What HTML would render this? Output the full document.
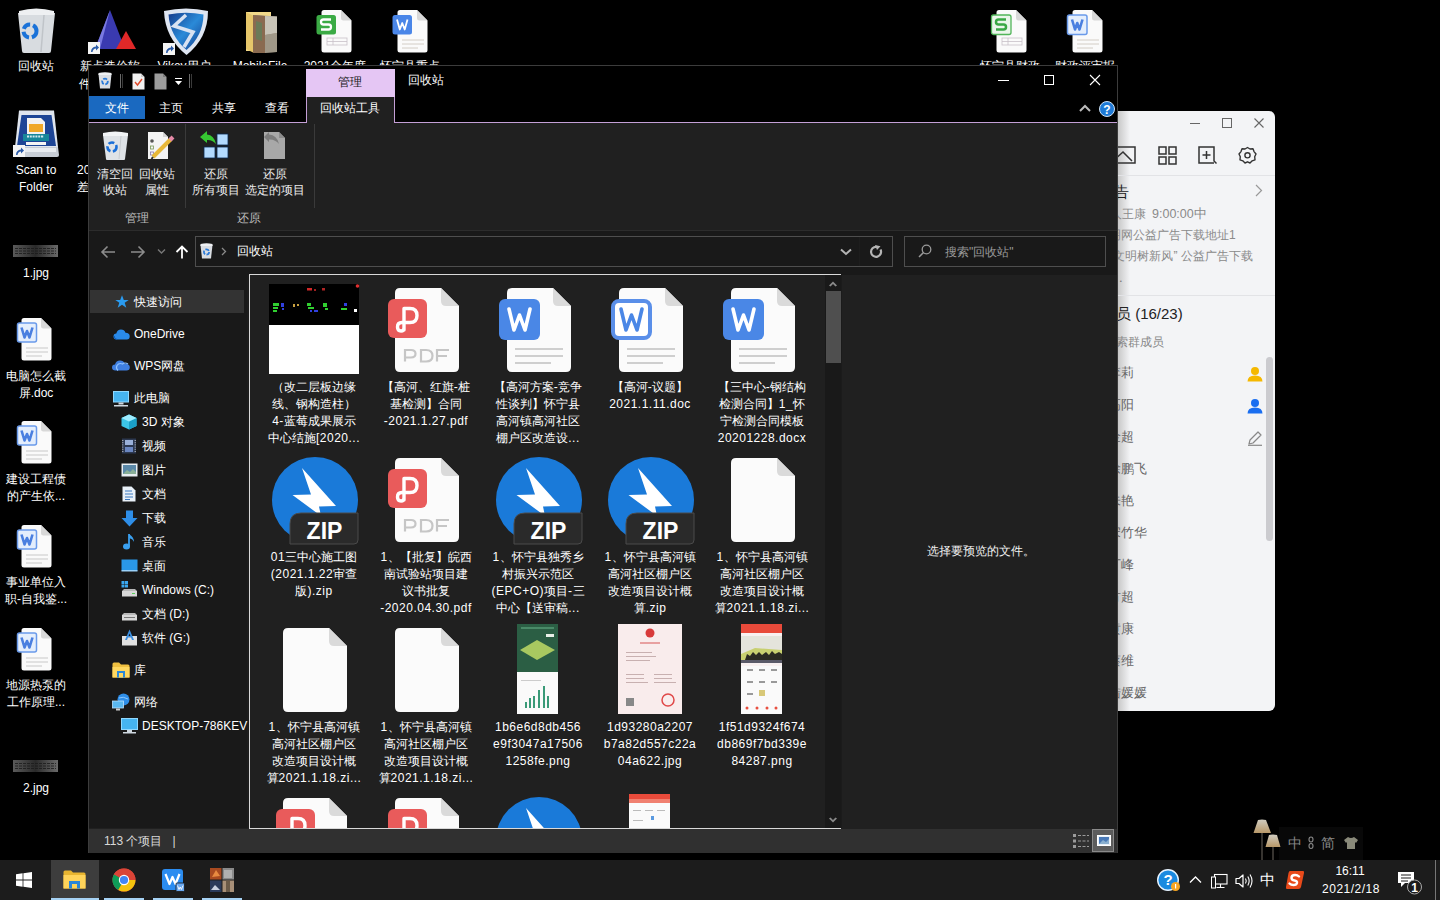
<!DOCTYPE html>
<html><head><meta charset="utf-8"><style>
*{margin:0;padding:0;box-sizing:border-box}
html,body{width:1440px;height:900px;overflow:hidden;background:#000}
body{position:relative;font-family:"Liberation Sans",sans-serif;font-size:12px;color:#fff}
.a{position:absolute}
.t{position:absolute;white-space:nowrap;line-height:16px}
svg{display:block;overflow:visible}
.dl{position:absolute;width:80px;text-align:center;color:#fff;font-size:12px;line-height:17px;white-space:nowrap}
.fl{position:absolute;width:112px;text-align:center;color:#fff;font-size:12px;line-height:17px;white-space:nowrap}
.nv{position:absolute;color:#fff;font-size:12px;line-height:16px;white-space:nowrap}
.rl{position:absolute;color:#e6e6e6;font-size:12px;line-height:17px;text-align:center;white-space:nowrap}
.ch{position:absolute;color:#8a8a8a;font-size:12px;line-height:16px;white-space:nowrap}
</style></head><body>
<svg width="0" height="0" style="position:absolute">
<defs>
 <symbol id="doc" viewBox="0 0 64 84">
  <path d="M5 0H46L64 18V79Q64 84 59 84H5Q0 84 0 79V5Q0 0 5 0Z" fill="#fbfbfb"/>
  <path d="M46 0V13Q46 18 51 18H64Z" fill="#dadada"/>
 </symbol>
 <symbol id="wb" viewBox="0 0 41 41">
  <rect x="0" y="0" width="41" height="41" rx="6" fill="#4a87e6"/>
  <path d="M10 10L15 31L20.5 16L26 31L31 10" fill="none" stroke="#fff" stroke-width="3.6" stroke-linecap="round" stroke-linejoin="round"/>
 </symbol>
 <symbol id="wb2" viewBox="0 0 41 41">
  <rect x="2" y="2" width="37" height="37" rx="6" fill="#fff" stroke="#5a8fe9" stroke-width="4"/>
  <path d="M10 10L15 31L20.5 16L26 31L31 10" fill="none" stroke="#4a87e6" stroke-width="3.6" stroke-linecap="round" stroke-linejoin="round"/>
 </symbol>
 <symbol id="lines" viewBox="0 0 48 16">
  <rect x="0" y="0" width="48" height="2" fill="#cfcfcf"/>
  <rect x="0" y="7" width="48" height="2" fill="#cfcfcf"/>
  <rect x="0" y="14" width="36" height="2" fill="#cfcfcf"/>
 </symbol>
 <symbol id="pb" viewBox="0 0 39 39">
  <rect x="0" y="0" width="39" height="39" rx="6" fill="#e95b5b"/>
  <path d="M16 31V9.5H22Q29 9.5 29 16.5Q29 23.5 22 23.5H14Q9.5 23.5 9.5 28Q9.5 32 13 32Q16 32 16 29" fill="none" stroke="#fff" stroke-width="3.4" stroke-linecap="round" stroke-linejoin="round"/>
 </symbol>
 <symbol id="zip" viewBox="0 0 90 90">
  <circle cx="46" cy="44" r="43" fill="#1a7ad9"/>
  <path d="M33 12L67 50L50 50.5L52 60L23.5 39L42 38.5Z" fill="#fff"/>
  <path d="M21 68Q21 57 32 57H89V84Q89 88 85 88H21Z" fill="#2a2a2a" stroke="#4a4a4a" stroke-width="1"/>
  <text x="55.5" y="82.5" text-anchor="middle" font-family="Liberation Sans" font-weight="bold" font-size="23" fill="#fff">ZIP</text>
 </symbol>
</defs></svg>
<svg class="a" style="left:17px;top:8px" width="39" height="45" viewBox="0 0 39 45"><path d="M1 5L38 5L34 43Q34 45 32 45H7Q5 45 5 43Z" fill="#d8dce0"/><path d="M2 3Q19 -2 37 3V7H2Z" fill="#eef0f2"/><path d="M27 7L24 44" stroke="#c0c4c8" stroke-width="1.5"/><circle cx="13" cy="23" r="6.5" fill="none" stroke="#1a72d8" stroke-width="4" stroke-dasharray="8 3"/></svg><div class="dl" style="left:-4px;top:57.5px">回收站</div><svg class="a" style="left:88px;top:9px" width="50" height="46" viewBox="0 0 50 46"><path d="M22 1L37 40H7Z" fill="#3a3ab0"/><path d="M22 1L12 40H7Z" fill="#7a7ae0"/><path d="M38 22L48 40H28Z" fill="#e02828"/><g transform="translate(0,33)"><rect x="0" y="0" width="12" height="12" fill="#f4f4f4"/><path d="M3 10Q3 5 8 4.5V2.5L11 5.5L8 8.5V6.5Q5 6.8 4.5 10Z" fill="#2a5aa8"/></g></svg><svg class="a" style="left:162px;top:8px" width="48" height="48" viewBox="0 0 48 48"><defs><linearGradient id="vk" x1="0" y1="0" x2="1" y2="1"><stop offset="0" stop-color="#163c8c"/><stop offset="0.5" stop-color="#2a8ad8"/><stop offset="1" stop-color="#163c8c"/></linearGradient></defs><path d="M2 3Q24 -2 46 3Q46 30 24.5 47Q3 30 2 3Z" fill="#dfe6f2"/><path d="M6.5 6.5Q24 3 41.5 6.5Q41 28 24.5 42Q8 28 6.5 6.5Z" fill="url(#vk)"/><path d="M24 7L12 18L31 24L22 39" fill="none" stroke="#d8e2f2" stroke-width="3.5" stroke-linejoin="miter"/><g transform="translate(1,35)"><rect x="0" y="0" width="12" height="12" fill="#f4f4f4"/><path d="M3 10Q3 5 8 4.5V2.5L11 5.5L8 8.5V6.5Q5 6.8 4.5 10Z" fill="#2a5aa8"/></g></svg><svg class="a" style="left:245px;top:11px" width="34" height="43" viewBox="0 0 34 43"><path d="M1 1H26V40H1Z" fill="#f2d98a"/><path d="M1 1L9 5V42L1 38Z" fill="#e6c66a"/><path d="M8 4L32 5.5V41L8 42Z" fill="#9a8a78"/><path d="M8 4L20 5V42L8 42Z" fill="#8a6a50"/><path d="M20 5L32 5.5V22L20 24Z" fill="#c8c4b8"/><path d="M20 24L32 22V41L20 42Z" fill="#a09888"/><path d="M11 10L17 12V30L11 28Z" fill="#6a7a58"/></svg><svg class="a" style="left:315px;top:9px" width="38" height="45" viewBox="0 0 38 45"><path d="M6.5 1H26L36.5 11.5V41Q36.5 43.5 34 43.5H9Q6.5 43.5 6.5 41V3.5Q6.5 1 9 1Z" fill="#fafafa"/><path d="M26 1V9Q26 11.5 28.5 11.5H36.5Z" fill="#d8d8d8"/><rect x="12" y="29" width="20" height="7" fill="none" stroke="#c8c0c8" stroke-width="0.8"/><path d="M12 32.5H32M18 29V36" stroke="#c8c0c8" stroke-width="0.8"/><rect x="1.5" y="6" width="19.5" height="19.5" rx="2.5" fill="#3bab45"/><path d="M16 10.5H8.5Q6 10.5 6 13Q6 15.5 8.5 15.5H13.5Q16 15.5 16 18Q16 20.5 13.5 20.5H6" fill="none" stroke="#fff" stroke-width="2.3"/></svg><svg class="a" style="left:391px;top:9px" width="38" height="45" viewBox="0 0 38 45"><path d="M6.5 1H26L36.5 11.5V41Q36.5 43.5 34 43.5H9Q6.5 43.5 6.5 41V3.5Q6.5 1 9 1Z" fill="#fafafa"/><path d="M26 1V9Q26 11.5 28.5 11.5H36.5Z" fill="#d8d8d8"/><path d="M11 31H33M11 35H33M11 39H27" stroke="#cfc8c0" stroke-width="0.9"/><rect x="1.5" y="6" width="19.5" height="19.5" rx="2.5" fill="#4a86e8"/><path d="M6 10.5L8.8 20.5L11.25 14L13.7 20.5L16.5 10.5" fill="none" stroke="#fff" stroke-width="1.8" stroke-linejoin="round"/></svg><svg class="a" style="left:990px;top:9px" width="38" height="45" viewBox="0 0 38 45"><path d="M6.5 1H26L36.5 11.5V41Q36.5 43.5 34 43.5H9Q6.5 43.5 6.5 41V3.5Q6.5 1 9 1Z" fill="#fafafa"/><path d="M26 1V9Q26 11.5 28.5 11.5H36.5Z" fill="#d8d8d8"/><rect x="12" y="29" width="20" height="7" fill="none" stroke="#c8c0c8" stroke-width="0.8"/><path d="M12 32.5H32M18 29V36" stroke="#c8c0c8" stroke-width="0.8"/><rect x="1.5" y="6" width="19.5" height="19.5" rx="2" fill="#eaf6ea" stroke="#52b55a" stroke-width="1.3"/><path d="M16 10.5H8.5Q6 10.5 6 13Q6 15.5 8.5 15.5H13.5Q16 15.5 16 18Q16 20.5 13.5 20.5H6" fill="none" stroke="#3aa845" stroke-width="2.5"/></svg><svg class="a" style="left:1066px;top:9px" width="38" height="45" viewBox="0 0 38 45"><path d="M6.5 1H26L36.5 11.5V41Q36.5 43.5 34 43.5H9Q6.5 43.5 6.5 41V3.5Q6.5 1 9 1Z" fill="#fafafa"/><path d="M26 1V9Q26 11.5 28.5 11.5H36.5Z" fill="#d8d8d8"/><path d="M11 31H33M11 35H33M11 39H27" stroke="#cfc8c0" stroke-width="0.9"/><rect x="1.5" y="6" width="19.5" height="19.5" rx="2" fill="#e4eefc" stroke="#6a9aea" stroke-width="1.5"/><path d="M6 10.5L9 20.5L11.25 14L13.5 20.5L16.5 10.5" fill="none" stroke="#4a7fe0" stroke-width="2.6" stroke-linejoin="round"/></svg><div class="dl" style="left:70px;top:57.5px">新点造价软</div><div class="dl" style="left:144px;top:57.5px">Vikey用户</div><div class="dl" style="left:220px;top:57.5px">MobileFile</div><div class="dl" style="left:295px;top:57.5px">2021全年度</div><div class="dl" style="left:370px;top:57.5px">怀宁县重点</div><div class="dl" style="left:970px;top:57.5px">怀宁县财政</div><div class="dl" style="left:1045px;top:57.5px">财政评审报</div><div class="t" style="left:79px;top:76px;font-size:12px;line-height:17px">件</div><svg class="a" style="left:13px;top:110px" width="47" height="48" viewBox="0 0 47 48"><path d="M6 0.5H41L45 37H2Z" fill="#dfe5ee"/><path d="M8.5 5H38.5L43 36H4Z" fill="#1d4596"/><path d="M14 8H28L32 12V24H14Z" fill="#f2f2f2"/><path d="M16 14H30V22H16Z" fill="#f0a828"/><path d="M10 24H36V31H10Z" fill="#17879a"/><path d="M14 26.5H31" stroke="#cfe8ee" stroke-width="2" stroke-dasharray="2 0.8"/><path d="M13 32H33V35H13Z" fill="#f4f4f4"/><path d="M2 37H45L46 45Q46 47 44 47H3Q1 47 1 45Z" fill="#c8ced6"/><path d="M4 38H43V42H4Z" fill="#e8ecf0"/><g transform="translate(0,35)"><rect x="0" y="0" width="12" height="12" fill="#f4f4f4"/><path d="M3 10Q3 5 8 4.5V2.5L11 5.5L8 8.5V6.5Q5 6.8 4.5 10Z" fill="#2a5aa8"/></g></svg><div class="dl" style="left:-4px;top:161.5px">Scan to<br>Folder</div><svg class="a" style="left:13px;top:245px" width="45" height="12" viewBox="0 0 45 12"><defs><linearGradient id="jg" x1="0" y1="0" x2="1" y2="0"><stop offset="0" stop-color="#5a5a5a"/><stop offset="0.5" stop-color="#2a2a2a"/><stop offset="1" stop-color="#6a6a6a"/></linearGradient></defs><rect width="45" height="12" fill="url(#jg)"/><path d="M2 3.5H43M2 6H43M2 8.5H43" stroke="#1a1a1a" stroke-width="0.8" stroke-dasharray="3 1"/></svg><div class="dl" style="left:-4px;top:264.5px">1.jpg</div><svg class="a" style="left:15px;top:317px" width="38" height="45" viewBox="0 0 38 45"><path d="M6.5 1H26L36.5 11.5V41Q36.5 43.5 34 43.5H9Q6.5 43.5 6.5 41V3.5Q6.5 1 9 1Z" fill="#fafafa"/><path d="M26 1V9Q26 11.5 28.5 11.5H36.5Z" fill="#d8d8d8"/><path d="M11 31H33M11 35H33M11 39H27" stroke="#c8c8c8" stroke-width="1"/><rect x="2.5" y="6" width="19" height="19" rx="2" fill="#e4eefc" stroke="#6a9aea" stroke-width="1.5"/><path d="M6.5 10.5L9.5 20.5L12 14L14.5 20.5L17.5 10.5" fill="none" stroke="#4a7fe0" stroke-width="2.6" stroke-linejoin="round"/></svg><div class="dl" style="left:-4px;top:367.5px">电脑怎么截<br>屏.doc</div><svg class="a" style="left:15px;top:420px" width="38" height="45" viewBox="0 0 38 45"><path d="M6.5 1H26L36.5 11.5V41Q36.5 43.5 34 43.5H9Q6.5 43.5 6.5 41V3.5Q6.5 1 9 1Z" fill="#fafafa"/><path d="M26 1V9Q26 11.5 28.5 11.5H36.5Z" fill="#d8d8d8"/><path d="M11 31H33M11 35H33M11 39H27" stroke="#c8c8c8" stroke-width="1"/><rect x="2.5" y="6" width="19" height="19" rx="2" fill="#e4eefc" stroke="#6a9aea" stroke-width="1.5"/><path d="M6.5 10.5L9.5 20.5L12 14L14.5 20.5L17.5 10.5" fill="none" stroke="#4a7fe0" stroke-width="2.6" stroke-linejoin="round"/></svg><div class="dl" style="left:-4px;top:470.5px">建设工程债<br>的产生依...</div><svg class="a" style="left:15px;top:524px" width="38" height="45" viewBox="0 0 38 45"><path d="M6.5 1H26L36.5 11.5V41Q36.5 43.5 34 43.5H9Q6.5 43.5 6.5 41V3.5Q6.5 1 9 1Z" fill="#fafafa"/><path d="M26 1V9Q26 11.5 28.5 11.5H36.5Z" fill="#d8d8d8"/><path d="M11 31H33M11 35H33M11 39H27" stroke="#c8c8c8" stroke-width="1"/><rect x="2.5" y="6" width="19" height="19" rx="2" fill="#e4eefc" stroke="#6a9aea" stroke-width="1.5"/><path d="M6.5 10.5L9.5 20.5L12 14L14.5 20.5L17.5 10.5" fill="none" stroke="#4a7fe0" stroke-width="2.6" stroke-linejoin="round"/></svg><div class="dl" style="left:-4px;top:573.5px">事业单位入<br>职-自我鉴...</div><svg class="a" style="left:15px;top:627px" width="38" height="45" viewBox="0 0 38 45"><path d="M6.5 1H26L36.5 11.5V41Q36.5 43.5 34 43.5H9Q6.5 43.5 6.5 41V3.5Q6.5 1 9 1Z" fill="#fafafa"/><path d="M26 1V9Q26 11.5 28.5 11.5H36.5Z" fill="#d8d8d8"/><path d="M11 31H33M11 35H33M11 39H27" stroke="#c8c8c8" stroke-width="1"/><rect x="2.5" y="6" width="19" height="19" rx="2" fill="#e4eefc" stroke="#6a9aea" stroke-width="1.5"/><path d="M6.5 10.5L9.5 20.5L12 14L14.5 20.5L17.5 10.5" fill="none" stroke="#4a7fe0" stroke-width="2.6" stroke-linejoin="round"/></svg><div class="dl" style="left:-4px;top:676.5px">地源热泵的<br>工作原理...</div><svg class="a" style="left:13px;top:760px" width="45" height="12" viewBox="0 0 45 12"><defs><linearGradient id="jg" x1="0" y1="0" x2="1" y2="0"><stop offset="0" stop-color="#5a5a5a"/><stop offset="0.5" stop-color="#2a2a2a"/><stop offset="1" stop-color="#6a6a6a"/></linearGradient></defs><rect width="45" height="12" fill="url(#jg)"/><path d="M2 3.5H43M2 6H43M2 8.5H43" stroke="#1a1a1a" stroke-width="0.8" stroke-dasharray="3 1"/></svg><div class="dl" style="left:-4px;top:779.5px">2.jpg</div><div class="t" style="left:77px;top:161.5px;font-size:12px;line-height:17px">2021年度<br>差旅费</div><div class="a" style="left:1060px;top:111px;width:215px;height:600px;background:#f3f4f6;border-radius:0 6px 6px 0;overflow:hidden"><div class="a" style="left:58px;top:0;width:12px;height:600px;background:linear-gradient(90deg,#c8c8c8,#f3f4f6)"></div></div><svg class="a" style="left:1189px;top:117px" width="12" height="12" viewBox="0 0 12 12"><path d="M1 6.5H11" stroke="#666" stroke-width="1"/></svg><svg class="a" style="left:1221px;top:117px" width="12" height="12" viewBox="0 0 12 12"><rect x="1.5" y="1.5" width="9" height="9" fill="none" stroke="#666" stroke-width="1"/></svg><svg class="a" style="left:1253px;top:117px" width="12" height="12" viewBox="0 0 12 12"><path d="M1.5 1.5L10.5 10.5M10.5 1.5L1.5 10.5" stroke="#666" stroke-width="1.1"/></svg><svg class="a" style="left:1112px;top:145px" width="24" height="20" viewBox="0 0 24 20"><rect x="1" y="2" width="22" height="16" fill="none" stroke="#333" stroke-width="1.5"/><path d="M1 16L11 7L20 16" fill="none" stroke="#333" stroke-width="1.5"/></svg><svg class="a" style="left:1158px;top:146px" width="19" height="19" viewBox="0 0 19 19"><rect x="1" y="1" width="7" height="7" fill="none" stroke="#333" stroke-width="1.5"/><rect x="11" y="1" width="7" height="7" fill="none" stroke="#333" stroke-width="1.5"/><rect x="1" y="11" width="7" height="7" fill="none" stroke="#333" stroke-width="1.5"/><rect x="11" y="11" width="7" height="7" fill="none" stroke="#333" stroke-width="1.5"/></svg><svg class="a" style="left:1198px;top:146px" width="20" height="19" viewBox="0 0 20 19"><path d="M16 17H1V1H16V15L18.5 17.5" fill="none" stroke="#333" stroke-width="1.5"/><path d="M8.5 5V13M4.5 9H12.5" stroke="#333" stroke-width="1.5"/></svg><svg class="a" style="left:1238px;top:146px" width="19" height="19" viewBox="0 0 19 19"><path d="M9.5 1.5L12 3L15 2.8L16 5.6L18 8L16.7 10.8L17 13.8L14.2 14.8L12 17L9.5 15.8L7 17L4.8 14.8L2 13.8L2.3 10.8L1 8L3 5.6L4 2.8L7 3Z" fill="none" stroke="#333" stroke-width="1.4" stroke-linejoin="round"/><circle cx="9.5" cy="9.3" r="2.6" fill="none" stroke="#333" stroke-width="1.4"/></svg><div class="a" style="left:1100px;top:175px;width:175px;height:1px;background:#e2e3e6"></div><div class="t" style="left:1084px;top:184px;color:#222;font-size:14.5px;">群公告</div><svg class="a" style="left:1255px;top:184px" width="8" height="13" viewBox="0 0 8 13"><path d="M1 1L6.5 6.5L1 12" fill="none" stroke="#999" stroke-width="1.2"/></svg><div class="t" style="left:1109.5px;top:206px;color:#8a8a8a;font-size:12px;">人王康</div><div class="t" style="left:1152px;top:206px;color:#8a8a8a;font-size:12.5px;">9:00:00中</div><div class="t" style="left:1109px;top:227px;color:#8a8a8a;font-size:12px;">明网公益广告下载地址1</div><div class="t" style="left:1109.5px;top:248px;color:#8a8a8a;font-size:12px;">“文明树新风” 公益广告下载</div><div class="t" style="left:1119px;top:270px;color:#777;font-size:13px;">.</div><div class="a" style="left:1100px;top:295px;width:175px;height:1px;background:#e2e3e6"></div><div class="t" style="left:1101px;top:306px;color:#222;font-size:15px;">成员 (16/23)</div><div class="t" style="left:1104px;top:334px;color:#888;font-size:12px;">搜索群成员</div><div class="t" style="left:1108px;top:365px;color:#666;font-size:13px;">李莉</div><div class="t" style="left:1108px;top:397px;color:#666;font-size:13px;">高阳</div><div class="t" style="left:1108px;top:429px;color:#666;font-size:13px;">金超</div><div class="t" style="left:1108px;top:461px;color:#666;font-size:13px;">徐鹏飞</div><div class="t" style="left:1108px;top:493px;color:#666;font-size:13px;">朱艳</div><div class="t" style="left:1108px;top:525px;color:#666;font-size:13px;">宋竹华</div><div class="t" style="left:1108px;top:557px;color:#666;font-size:13px;">丁峰</div><div class="t" style="left:1108px;top:589px;color:#666;font-size:13px;">方超</div><div class="t" style="left:1108px;top:621px;color:#666;font-size:13px;">黄康</div><div class="t" style="left:1108px;top:653px;color:#666;font-size:13px;">蔡维</div><div class="t" style="left:1108px;top:685px;color:#666;font-size:13px;">陆媛媛</div><svg class="a" style="left:1247px;top:366px" width="16" height="16" viewBox="0 0 16 16"><circle cx="8" cy="5" r="4" fill="#f5b800"/><path d="M0.5 15.5Q0.5 9.5 8 9.5Q15.5 9.5 15.5 15.5Z" fill="#f5b800"/></svg><svg class="a" style="left:1247px;top:398px" width="16" height="16" viewBox="0 0 16 16"><circle cx="8" cy="5" r="4" fill="#1a6ef0"/><path d="M0.5 15.5Q0.5 9.5 8 9.5Q15.5 9.5 15.5 15.5Z" fill="#1a6ef0"/></svg><svg class="a" style="left:1247px;top:430px" width="16" height="16" viewBox="0 0 16 16"><path d="M2 14L3 10L11 2L14 5L6 13Z" fill="none" stroke="#888" stroke-width="1.2" stroke-linejoin="round"/><path d="M1 15.3H15" stroke="#888" stroke-width="1.2"/></svg><div class="a" style="left:1266px;top:357px;width:7px;height:184px;background:#cbcbcf;border-radius:4px"></div><div class="a" style="left:88px;top:65px;width:1030px;height:788px;background:#202020;overflow:hidden"><div class="a" style="left:0;top:0;width:1030px;height:1px;background:#3c3c3c"></div><div class="a" style="left:0;top:0;width:1px;height:788px;background:#3c3c3c"></div><div class="a" style="left:1029px;top:0;width:1px;height:788px;background:#3c3c3c"></div><div class="a" style="left:1px;top:1px;width:1028px;height:56px;background:#000"></div><div class="a" style="left:1px;top:57px;width:1028px;height:1px;background:#c49fd6"></div><div class="a" style="left:1px;top:58px;width:1028px;height:107px;background:#202020;"></div><div class="a" style="left:1px;top:165px;width:1028px;height:1px;background:#2c2c2c;"></div><div class="a" style="left:1px;top:166px;width:1028px;height:44px;background:#191919;"></div><div class="a" style="left:1px;top:210px;width:158px;height:553px;background:#191919;"></div><div class="a" style="left:159px;top:210px;width:2px;height:553px;background:#1c1c1c;"></div><div class="a" style="left:161px;top:209px;width:592px;height:555px;background:#202020;border:1px solid #d9d9d9;border-right:none"></div><div class="a" style="left:753px;top:210px;width:2px;height:553px;background:#1b1b1b;"></div><div class="a" style="left:754px;top:210px;width:275px;height:553px;background:#202020;"></div><div class="a" style="left:1px;top:764px;width:1028px;height:24px;background:#303030;"></div><div class="a" style="left:218px;top:4px;width:89px;height:28px;background:#e5c6f4;"></div><div class="t" style="left:162px;top:9px;width:200px;text-align:center;color:#1a1a1a;font-size:12px;">管理</div><div class="t" style="left:320px;top:7px;color:#fff;font-size:12px;">回收站</div><div class="a" style="left:1px;top:31px;width:56px;height:23px;background:#1a69c0;"></div><div class="t" style="left:-71px;top:35px;width:200px;text-align:center;color:#fff;font-size:12px;">文件</div><div class="t" style="left:-17px;top:35px;width:200px;text-align:center;color:#fff;font-size:12px;">主页</div><div class="t" style="left:36px;top:35px;width:200px;text-align:center;color:#fff;font-size:12px;">共享</div><div class="t" style="left:89px;top:35px;width:200px;text-align:center;color:#fff;font-size:12px;">查看</div><div class="a" style="left:218px;top:32px;width:89px;height:26px;background:#202020;"></div><div class="a" style="left:218px;top:32px;width:1px;height:26px;background:#c49fd6;"></div><div class="a" style="left:306px;top:32px;width:1px;height:26px;background:#c49fd6;"></div><div class="t" style="left:162px;top:35px;width:200px;text-align:center;color:#fff;font-size:12px;">回收站工具</div><svg class="a" style="left:910px;top:10px" width="12" height="12"><path d="M0 5.5H11" stroke="#fff" stroke-width="1"/></svg><svg class="a" style="left:955px;top:9px" width="12" height="12"><rect x="1.5" y="1.5" width="9" height="9" fill="none" stroke="#fff" stroke-width="1"/></svg><svg class="a" style="left:1001px;top:9px" width="12" height="12"><path d="M1 1L11 11M11 1L1 11" stroke="#fff" stroke-width="1.1"/></svg><svg class="a" style="left:991px;top:39px" width="12" height="10"><path d="M1 7L6 2L11 7" fill="none" stroke="#bbb" stroke-width="2"/></svg><svg class="a" style="left:1011px;top:36px" width="17" height="17"><circle cx="8" cy="8" r="7.5" fill="#1e7ad6" stroke="#cfe3f7" stroke-width="1"/><text x="8" y="12.5" text-anchor="middle" font-family="Liberation Sans" font-weight="bold" font-size="12" fill="#fff">?</text></svg><svg class="a" style="left:14px;top:66px" width="27" height="29" viewBox="0 0 27 29"><path d="M1 4L26 4L23 28Q23 29 22 29H5Q4 29 4 28Z" fill="#dfe3e7"/><path d="M1 2Q13 -1 26 2V5H1Z" fill="#f2f4f6"/><path d="M19 5L17 28" stroke="#c8ccd0" stroke-width="1"/><circle cx="10" cy="16" r="4.5" fill="none" stroke="#1a6fd8" stroke-width="2.6" stroke-dasharray="6 2.5"/></svg><svg class="a" style="left:59px;top:66px" width="28" height="29" viewBox="0 0 28 29"><path d="M1 1H16L21 6V28H1Z" fill="#f4f4f4"/><path d="M16 1V6H21Z" fill="#d4d4d4"/><circle cx="5" cy="10" r="1.8" fill="#555"/><rect x="3.5" y="15" width="3" height="3" fill="none" stroke="#7a9a5a" stroke-width="0.8"/><rect x="3.5" y="21" width="3" height="3" fill="none" stroke="#8a7ab0" stroke-width="0.8"/><path d="M6 26L24 8" stroke="#e8b838" stroke-width="4"/><path d="M23 9L26 6" stroke="#e58aa8" stroke-width="4"/><path d="M4.5 28L6 26" stroke="#333" stroke-width="2"/></svg><div class="a" style="left:97px;top:59px;width:1px;height:84px;background:#3a3a3a"></div><div class="a" style="left:226px;top:59px;width:1px;height:84px;background:#3a3a3a"></div><svg class="a" style="left:111px;top:65px" width="31" height="30" viewBox="0 0 31 30"><rect x="18" y="4" width="11" height="11" fill="#b3dbff" stroke="#082850" stroke-width="0.8"/><rect x="5" y="17" width="11" height="11" fill="#b3dbff" stroke="#082850" stroke-width="0.8"/><rect x="18" y="17" width="11" height="11" fill="#b3dbff" stroke="#082850" stroke-width="0.8"/><path d="M1 7L8 1V4.5Q15 5 17 14Q13 9.5 8 10V13Z" fill="#36c832"/></svg><svg class="a" style="left:175px;top:66px" width="23" height="29" viewBox="0 0 23 29"><path d="M1 1H16L22 7V28H1Z" fill="#a8a8a8"/><path d="M16 1V7H22Z" fill="#8c8c8c"/><path d="M1 6L6 1V3.5Q14 4 16 13Q12 8 6 8.5V11Z" fill="#7c7c7c"/></svg><div class="t" style="left:-73px;top:101px;width:200px;text-align:center;color:#ececec;font-size:12px;">清空回</div><div class="t" style="left:-73px;top:117px;width:200px;text-align:center;color:#ececec;font-size:12px;">收站</div><div class="t" style="left:-31px;top:101px;width:200px;text-align:center;color:#ececec;font-size:12px;">回收站</div><div class="t" style="left:-31px;top:117px;width:200px;text-align:center;color:#ececec;font-size:12px;">属性</div><div class="t" style="left:28px;top:101px;width:200px;text-align:center;color:#ececec;font-size:12px;">还原</div><div class="t" style="left:28px;top:117px;width:200px;text-align:center;color:#ececec;font-size:12px;">所有项目</div><div class="t" style="left:87px;top:101px;width:200px;text-align:center;color:#ececec;font-size:12px;">还原</div><div class="t" style="left:87px;top:117px;width:200px;text-align:center;color:#ececec;font-size:12px;">选定的项目</div><div class="t" style="left:-51px;top:145px;width:200px;text-align:center;color:#bdbdbd;font-size:12px;">管理</div><div class="t" style="left:61px;top:145px;width:200px;text-align:center;color:#bdbdbd;font-size:12px;">还原</div><svg class="a" style="left:10px;top:7px" width="14" height="17" viewBox="0 0 14 17"><path d="M0.5 2H13.5L12 16.5H2Z" fill="#d9dde2"/><path d="M0.5 1Q7 -0.5 13.5 1V3H0.5Z" fill="#eef0f2"/><circle cx="7" cy="9.5" r="2.8" fill="none" stroke="#2a7ad8" stroke-width="1.8" stroke-dasharray="4 1.5"/></svg><div class="a" style="left:32px;top:9px;width:1px;height:14px;background:#6a6a6a;"></div><div class="a" style="left:34px;top:9px;width:1px;height:14px;background:#3a3a3a;"></div><svg class="a" style="left:44px;top:8px" width="13" height="17" viewBox="0 0 13 17"><path d="M0.5 0.5H9L12.5 4V16.5H0.5Z" fill="#f1f1f1"/><path d="M9 0.5V4H12.5Z" fill="#ccc"/><path d="M3 9L5.5 12L10 6" fill="none" stroke="#e04a2a" stroke-width="1.4"/></svg><svg class="a" style="left:66px;top:8px" width="13" height="17" viewBox="0 0 13 17"><path d="M0.5 0.5H9L12.5 4V16.5H0.5Z" fill="#9c9c9c"/><path d="M9 0.5V4H12.5Z" fill="#7a7a7a"/></svg><svg class="a" style="left:86px;top:12px" width="9" height="9" viewBox="0 0 9 9"><path d="M1 1.5H8" stroke="#fff" stroke-width="1"/><path d="M1 4H8L4.5 8Z" fill="#fff"/></svg><div class="a" style="left:101px;top:9px;width:1px;height:14px;background:#6a6a6a;"></div><div class="a" style="left:103px;top:9px;width:1px;height:14px;background:#3a3a3a;"></div><svg class="a" style="left:12px;top:180px" width="16" height="14" viewBox="0 0 16 14"><path d="M15 7H2M7.5 1.5L2 7L7.5 12.5" fill="none" stroke="#8c8c8c" stroke-width="1.6"/></svg><svg class="a" style="left:42px;top:180px" width="16" height="14" viewBox="0 0 16 14"><path d="M1 7H14M8.5 1.5L14 7L8.5 12.5" fill="none" stroke="#8c8c8c" stroke-width="1.6"/></svg><svg class="a" style="left:69px;top:183px" width="9" height="7" viewBox="0 0 9 7"><path d="M1 1.5L4.5 5L8 1.5" fill="none" stroke="#777" stroke-width="1.4"/></svg><svg class="a" style="left:87px;top:180px" width="14" height="14" viewBox="0 0 14 14"><path d="M7 13.5V1.5M1.5 7L7 1.5L12.5 7" fill="none" stroke="#fff" stroke-width="1.8"/></svg><div class="a" style="left:107px;top:171px;width:698px;height:31px;background:#191919;border:1px solid #4e4e4e"></div><div class="a" style="left:771px;top:172px;width:1px;height:29px;background:#1d1d1d;"></div><svg class="a" style="left:112px;top:178px" width="13" height="16" viewBox="0 0 13 16"><path d="M0.5 2H12.5L11 15.5H2Z" fill="#d9dde2"/><path d="M0.5 1Q6.5 -0.5 12.5 1V3H0.5Z" fill="#eef0f2"/><circle cx="6.5" cy="9" r="2.6" fill="none" stroke="#2a7ad8" stroke-width="1.7" stroke-dasharray="4 1.4"/></svg><svg class="a" style="left:133px;top:182px" width="6" height="9" viewBox="0 0 6 9"><path d="M1 1L4.5 4.5L1 8" fill="none" stroke="#8a8a8a" stroke-width="1.3"/></svg><div class="t" style="left:149px;top:178px;color:#fff;font-size:12px;">回收站</div><svg class="a" style="left:752px;top:183px" width="12" height="8" viewBox="0 0 12 8"><path d="M1 1.5L6 6L11 1.5" fill="none" stroke="#b5b5b5" stroke-width="2"/></svg><svg class="a" style="left:782px;top:180px" width="13" height="13" viewBox="0 0 13 13"><path d="M10.5 4.5A5 5 0 1 1 6.5 1.8" fill="none" stroke="#b5b5b5" stroke-width="2.2"/><path d="M5 0L10.5 1.2L7 5Z" fill="#b5b5b5"/></svg><div class="a" style="left:816px;top:171px;width:202px;height:31px;background:#191919;border:1px solid #4e4e4e"></div><svg class="a" style="left:830px;top:179px" width="14" height="14" viewBox="0 0 14 14"><circle cx="8.5" cy="5.5" r="4.3" fill="none" stroke="#9a9a9a" stroke-width="1.3"/><path d="M5.5 8.5L1 13" stroke="#9a9a9a" stroke-width="1.5"/></svg><div class="t" style="left:857px;top:179px;color:#9a9a9a;font-size:12px;">搜索"回收站"</div><div class="a" style="left:2px;top:225px;width:154px;height:23px;background:#333333;"></div><svg class="a" style="left:27px;top:230px" width="14" height="13" viewBox="0 0 14 13"><path d="M7 0.3L8.8 4.9H13.7L9.7 7.8L11.3 12.7L7 9.7L2.7 12.7L4.3 7.8L0.3 4.9H5.2Z" fill="#2a9bf0"/></svg><div class="t" style="left:46px;top:229px;color:#fff;font-size:12px;">快速访问</div><svg class="a" style="left:25px;top:263px" width="17" height="12" viewBox="0 0 17 12"><path d="M3.5 11.5Q0.5 11.5 0.5 8.5Q0.5 5.7 3.3 5.5Q4.3 1.5 8 1.5Q11.3 1.5 12.5 4.8Q16.7 4.8 16.7 8.3Q16.7 11.5 13.8 11.5Z" fill="#2a8ae8"/><path d="M4 11.5Q1 11 1.2 8" fill="none" stroke="#0a5ab8" stroke-width="1"/></svg><div class="t" style="left:46px;top:261px;color:#fff;font-size:12px;">OneDrive</div><svg class="a" style="left:24px;top:293px" width="18" height="13" viewBox="0 0 18 13"><path d="M3.5 12.5Q0 12.5 0 9.5Q0 6.7 3 6.5Q4 2.5 8 2.5Q11.5 2.5 12.8 5.8Q17.8 5.8 17.8 9.3Q17.8 12.5 14.5 12.5Z" fill="#3f7fe0"/><path d="M6 12.5Q3.5 10 5 7.5Q7 4.5 10.5 6Q13 4 16 6" fill="none" stroke="#8fc2ff" stroke-width="1.2"/></svg><div class="t" style="left:46px;top:293px;color:#fff;font-size:12px;">WPS网盘</div><svg class="a" style="left:25px;top:326px" width="16" height="16" viewBox="0 0 16 16"><rect x="0.5" y="0.5" width="15" height="10.5" fill="#46b4f0"/><rect x="0.5" y="0.5" width="15" height="10.5" fill="none" stroke="#8fd8ff" stroke-width="1"/><rect x="5.5" y="11.5" width="5" height="2" fill="#cfd8e0"/><rect x="1" y="14" width="14" height="1.5" fill="#cfd8e0"/></svg><div class="t" style="left:46px;top:325px;color:#fff;font-size:12px;">此电脑</div><svg class="a" style="left:33px;top:349px" width="16" height="16" viewBox="0 0 16 16"><path d="M8 0.5L15.5 4V12L8 15.5L0.5 12V4Z" fill="#3cc6e8"/><path d="M8 7.5L15.5 4V12L8 15.5Z" fill="#1aa0c8"/><path d="M0.5 4L8 7.5L15.5 4L8 0.5Z" fill="#9eecff"/></svg><div class="t" style="left:54px;top:349px;color:#fff;font-size:12px;">3D 对象</div><svg class="a" style="left:33px;top:373px" width="16" height="16" viewBox="0 0 16 16"><rect x="1" y="0.5" width="14" height="15" fill="#2c3850"/><rect x="4" y="2" width="8" height="5" fill="#9ab0d8"/><rect x="4" y="9" width="8" height="5" fill="#6a86c0"/><path d="M1.8 2V14M14.2 2V14" stroke="#ccc" stroke-width="1" stroke-dasharray="1 1.2"/></svg><div class="t" style="left:54px;top:373px;color:#fff;font-size:12px;">视频</div><svg class="a" style="left:33px;top:398px" width="17" height="14" viewBox="0 0 17 14"><rect x="0.5" y="0.5" width="16" height="13" fill="#e8eef2"/><rect x="2" y="2" width="13" height="9" fill="#5a88a8"/><path d="M2 11L6 7L9 9L12 6L15 9V11Z" fill="#8ab098"/></svg><div class="t" style="left:54px;top:397px;color:#fff;font-size:12px;">图片</div><svg class="a" style="left:34px;top:421px" width="14" height="16" viewBox="0 0 14 16"><path d="M0.5 0.5H9.5L13.5 4.5V15.5H0.5Z" fill="#e8f0f8"/><path d="M3 5H10M3 8H11M3 11H11M3 13.5H8" stroke="#3a78c0" stroke-width="1"/></svg><div class="t" style="left:54px;top:421px;color:#fff;font-size:12px;">文档</div><svg class="a" style="left:33px;top:445px" width="17" height="17" viewBox="0 0 17 17"><path d="M5 0.5H12V8H16.5L8.5 16.5L0.5 8H5Z" fill="#2e8ee8"/></svg><div class="t" style="left:54px;top:445px;color:#fff;font-size:12px;">下载</div><svg class="a" style="left:35px;top:468px" width="12" height="18" viewBox="0 0 12 18"><path d="M6 1V13" stroke="#3aa0f0" stroke-width="1.8"/><ellipse cx="3.5" cy="13.5" rx="3.5" ry="3" fill="#3aa0f0"/><path d="M6 1Q11 4 11 9Q10 6 6 5Z" fill="#3aa0f0"/></svg><div class="t" style="left:54px;top:469px;color:#fff;font-size:12px;">音乐</div><svg class="a" style="left:33px;top:494px" width="17" height="13" viewBox="0 0 17 13"><rect x="0.5" y="0.5" width="16" height="11" fill="#2a98e8"/><rect x="0.5" y="11" width="16" height="1.5" fill="#9ad0f8"/></svg><div class="t" style="left:54px;top:493px;color:#fff;font-size:12px;">桌面</div><svg class="a" style="left:33px;top:516px" width="17" height="17" viewBox="0 0 17 17"><rect x="0.5" y="0" width="3" height="3" fill="#3aa8f0"/><rect x="4" y="0" width="3" height="3" fill="#3aa8f0"/><rect x="0.5" y="3.5" width="3" height="3" fill="#3aa8f0"/><rect x="4" y="3.5" width="3" height="3" fill="#3aa8f0"/><path d="M1 10H16V15.5H1Z" fill="#d8d8d8"/><path d="M3 8H14L16 10H1Z" fill="#b8b8b8"/><rect x="11" y="12" width="3" height="1" fill="#5ad05a"/></svg><div class="t" style="left:54px;top:517px;color:#fff;font-size:12px;">Windows (C:)</div><svg class="a" style="left:33px;top:540px" width="17" height="17" viewBox="0 0 17 17"><path d="M1 10H16V15.5H1Z" fill="#d8d8d8"/><path d="M3 8H14L16 10H1Z" fill="#b8b8b8"/><rect x="3" y="12" width="11" height="1" fill="#777"/></svg><div class="t" style="left:54px;top:541px;color:#fff;font-size:12px;">文档 (D:)</div><svg class="a" style="left:33px;top:564px" width="17" height="17" viewBox="0 0 17 17"><path d="M1 7H16V16.5H1Z" fill="#e0e0e0"/><path d="M8.5 0.5L4 11H6L7 8.5H10L11 11H13ZM7.6 7L8.5 4.5L9.4 7Z" fill="#3a8ee0"/></svg><div class="t" style="left:54px;top:565px;color:#fff;font-size:12px;">软件 (G:)</div><svg class="a" style="left:24px;top:597px" width="18" height="16" viewBox="0 0 18 16"><path d="M0.5 2Q0.5 0.5 2 0.5H7L9 2.5H16Q17.5 2.5 17.5 4V15.5H0.5Z" fill="#f0c040"/><rect x="0.5" y="5" width="17" height="10.5" fill="#ffd860"/><rect x="5" y="9" width="8" height="6.5" fill="#2a88d8"/><rect x="7" y="11" width="4" height="4.5" fill="#ffd860"/></svg><div class="t" style="left:46px;top:597px;color:#fff;font-size:12px;">库</div><svg class="a" style="left:24px;top:628px" width="18" height="18" viewBox="0 0 18 18"><circle cx="11.5" cy="6.5" r="6" fill="#2e8ee8"/><path d="M7 5Q11 3 16 6" stroke="#8cc8ff" stroke-width="1" fill="none"/><rect x="0.5" y="8" width="11" height="7" fill="#5ab8f0" stroke="#b8e0ff" stroke-width="0.8"/><rect x="4" y="15.5" width="4" height="2" fill="#ccc"/></svg><div class="t" style="left:46px;top:629px;color:#fff;font-size:12px;">网络</div><svg class="a" style="left:33px;top:653px" width="17" height="16" viewBox="0 0 17 16"><rect x="0.5" y="0.5" width="16" height="11" fill="#46b4f0" stroke="#8fd8ff" stroke-width="1"/><rect x="6" y="12" width="5" height="2" fill="#cfd8e0"/><rect x="2" y="14" width="13" height="1.5" fill="#cfd8e0"/></svg><div class="t" style="left:54px;top:653px;color:#fff;font-size:12px;">DESKTOP-786KEV</div><div class="a" style="left:162px;top:210px;width:575px;height:553px;overflow:hidden"><div class="a" style="left:19px;top:9px;width:90px;height:41px;background:#000"></div><div class="a" style="left:19px;top:50px;width:90px;height:49px;background:#fff"></div><svg class="a" style="left:19px;top:9px" width="90" height="41"><rect x="38" y="4" width="5" height="2.5" fill="#d02828"/><rect x="45" y="5" width="2" height="2" fill="#a02020"/><rect x="53" y="4" width="3" height="2.5" fill="#b02424"/><circle cx="88.5" cy="2" r="1.8" fill="#e03030"/><g fill="#30d030"><rect x="4" y="19" width="6" height="3"/><rect x="4" y="23" width="5" height="2"/><rect x="4" y="26" width="4" height="2"/><rect x="38" y="19" width="4" height="3"/><rect x="39" y="23" width="6" height="2"/><rect x="54" y="19" width="4" height="4"/><rect x="56" y="24" width="3" height="2"/><rect x="72" y="24" width="6" height="2"/></g><g fill="#3040e0"><rect x="12" y="19" width="3" height="4"/><rect x="13" y="24" width="2" height="2"/><rect x="41" y="26" width="2" height="2"/><rect x="45" y="26" width="4" height="2"/><rect x="75" y="19" width="3" height="3"/></g><g fill="#c8a040"><rect x="24" y="20" width="2" height="3"/><rect x="28" y="20" width="2" height="2"/></g><rect x="85" y="25" width="3" height="3" fill="#fff"/></svg><div class="fl" style="left:8px;top:104px">（改二层板边缘<br>线、钢构造柱）<br><span style="letter-spacing:.5px">4-</span>蓝莓成果展示<br>中心结施<span style="letter-spacing:.5px">[2020...</span></div><svg class="a" style="left:145px;top:13px" width="64" height="84"><use href="#doc"/></svg><svg class="a" style="left:145px;top:13px" width="64" height="84"><path d="M10 73.5V62H16Q20.5 62 20.5 65.8Q20.5 69.5 16 69.5H10M26 62V73.5H31Q37.5 73.5 37.5 67.8Q37.5 62 31 62ZM54 62H42V73.5M42 68H52" fill="none" stroke="#c6c6c6" stroke-width="2.2"/></svg><svg class="a" style="left:138px;top:24px" width="39" height="39"><use href="#pb"/></svg><div class="fl" style="left:120px;top:104px">【高河、红旗<span style="letter-spacing:.5px">-</span>桩<br>基检测】合同<br><span style="letter-spacing:.5px">-2021.1.27.pdf</span></div><svg class="a" style="left:257.0px;top:13px" width="64.0" height="84.0"><use href="#doc"/></svg><svg class="a" style="left:265.0px;top:73.0px" width="48.0" height="16.0"><use href="#lines"/></svg><svg class="a" style="left:249.0px;top:24.0px" width="41.0" height="41.0"><use href="#wb"/></svg><div class="fl" style="left:232px;top:104px">【高河方案<span style="letter-spacing:.5px">-</span>竞争<br>性谈判】怀宁县<br>高河镇高河社区<br>棚户区改造设<span style="letter-spacing:.5px">...</span></div><svg class="a" style="left:369.0px;top:13px" width="64.0" height="84.0"><use href="#doc"/></svg><svg class="a" style="left:377.0px;top:73.0px" width="48.0" height="16.0"><use href="#lines"/></svg><svg class="a" style="left:361.0px;top:24.0px" width="41.0" height="41.0"><use href="#wb2"/></svg><div class="fl" style="left:344px;top:104px">【高河<span style="letter-spacing:.5px">-</span>议题】<br><span style="letter-spacing:.5px">2021.1.11.doc</span></div><svg class="a" style="left:481.0px;top:13px" width="64.0" height="84.0"><use href="#doc"/></svg><svg class="a" style="left:489.0px;top:73.0px" width="48.0" height="16.0"><use href="#lines"/></svg><svg class="a" style="left:473.0px;top:24.0px" width="41.0" height="41.0"><use href="#wb"/></svg><div class="fl" style="left:456px;top:104px">【三中心<span style="letter-spacing:.5px">-</span>钢结构<br>检测合同】<span style="letter-spacing:.5px">1_</span>怀<br>宁检测合同模板<br><span style="letter-spacing:.5px">20201228.docx</span></div><svg class="a" style="left:19px;top:181px" width="90" height="90"><use href="#zip"/></svg><div class="fl" style="left:8px;top:274px"><span style="letter-spacing:.5px">01</span>三中心施工图<br><span style="letter-spacing:.5px">(2021.1.22</span>审查<br>版<span style="letter-spacing:.5px">).zip</span></div><svg class="a" style="left:145px;top:183px" width="64" height="84"><use href="#doc"/></svg><svg class="a" style="left:145px;top:183px" width="64" height="84"><path d="M10 73.5V62H16Q20.5 62 20.5 65.8Q20.5 69.5 16 69.5H10M26 62V73.5H31Q37.5 73.5 37.5 67.8Q37.5 62 31 62ZM54 62H42V73.5M42 68H52" fill="none" stroke="#c6c6c6" stroke-width="2.2"/></svg><svg class="a" style="left:138px;top:194px" width="39" height="39"><use href="#pb"/></svg><div class="fl" style="left:120px;top:274px"><span style="letter-spacing:.5px">1</span>、【批复】皖西<br>南试验站项目建<br>议书批复<br><span style="letter-spacing:.5px">-2020.04.30.pdf</span></div><svg class="a" style="left:243px;top:181px" width="90" height="90"><use href="#zip"/></svg><div class="fl" style="left:232px;top:274px"><span style="letter-spacing:.5px">1</span>、怀宁县独秀乡<br>村振兴示范区<br><span style="letter-spacing:.5px">(EPC+O)</span>项目<span style="letter-spacing:.5px">-</span>三<br>中心【送审稿<span style="letter-spacing:.5px">...</span></div><svg class="a" style="left:355px;top:181px" width="90" height="90"><use href="#zip"/></svg><div class="fl" style="left:344px;top:274px"><span style="letter-spacing:.5px">1</span>、怀宁县高河镇<br>高河社区棚户区<br>改造项目设计概<br>算<span style="letter-spacing:.5px">.zip</span></div><svg class="a" style="left:481px;top:183px" width="64" height="84"><use href="#doc"/></svg><div class="fl" style="left:456px;top:274px"><span style="letter-spacing:.5px">1</span>、怀宁县高河镇<br>高河社区棚户区<br>改造项目设计概<br>算<span style="letter-spacing:.5px">2021.1.18.zi...</span></div><svg class="a" style="left:33px;top:353px" width="64" height="84"><use href="#doc"/></svg><div class="fl" style="left:8px;top:444px"><span style="letter-spacing:.5px">1</span>、怀宁县高河镇<br>高河社区棚户区<br>改造项目设计概<br>算<span style="letter-spacing:.5px">2021.1.18.zi...</span></div><svg class="a" style="left:145px;top:353px" width="64" height="84"><use href="#doc"/></svg><div class="fl" style="left:120px;top:444px"><span style="letter-spacing:.5px">1</span>、怀宁县高河镇<br>高河社区棚户区<br>改造项目设计概<br>算<span style="letter-spacing:.5px">2021.1.18.zi...</span></div><svg class="a" style="left:267px;top:349px" width="41" height="90"><rect width="41" height="48" fill="#2b5e44"/><rect y="48" width="41" height="42" fill="#fafafa"/><path d="M3 26L20 16L38 26L20 36Z" fill="#a8c860"/><rect x="4" y="3" width="33" height="2" fill="#4a8a68"/><rect x="29" y="10" width="8" height="3" fill="#e8f0e8"/><rect x="8" y="78" width="2" height="6" fill="#3a9a78"/><rect x="12" y="74" width="2" height="10" fill="#3a9a78"/><rect x="16" y="72" width="2" height="12" fill="#3a9a78"/><rect x="21" y="66" width="2" height="18" fill="#3a9a78"/><rect x="26" y="62" width="2" height="22" fill="#3a9a78"/><rect x="30" y="72" width="2" height="12" fill="#3a9a78"/><rect x="4" y="56" width="20" height="1" fill="#ccc"/></svg><div class="fl" style="left:232px;top:444px"><span style="letter-spacing:.5px">1b6e6d8db456</span><br><span style="letter-spacing:.5px">e9f3047a17506</span><br><span style="letter-spacing:.5px">1258fe.png</span></div><svg class="a" style="left:368px;top:349px" width="64" height="90"><rect width="64" height="90" fill="#f9ecec"/><circle cx="32" cy="9" r="4.5" fill="#d83a3a"/><rect x="22" y="18" width="20" height="2" fill="#e8a0a0"/><g fill="#c8b0b0"><rect x="8" y="28" width="26" height="1"/><rect x="8" y="32" width="30" height="1"/><rect x="8" y="36" width="24" height="1"/><rect x="8" y="50" width="18" height="1"/><rect x="36" y="50" width="18" height="1"/><rect x="8" y="54" width="18" height="1"/><rect x="36" y="54" width="18" height="1"/><rect x="8" y="58" width="22" height="1"/><rect x="36" y="58" width="22" height="1"/></g><rect x="8" y="74" width="8" height="8" fill="#888"/><circle cx="50" cy="76" r="6" fill="none" stroke="#e04848" stroke-width="1.5"/></svg><div class="fl" style="left:344px;top:444px"><span style="letter-spacing:.5px">1d93280a2207</span><br><span style="letter-spacing:.5px">b7a82d557c22a</span><br><span style="letter-spacing:.5px">04a622.jpg</span></div><svg class="a" style="left:491px;top:349px" width="41" height="90"><rect width="41" height="90" fill="#fafafa"/><rect width="41" height="9" fill="#e84a3a"/><rect y="9" width="41" height="3" fill="#f8f0f0"/><rect y="12" width="41" height="24" fill="#e4e4dc"/><path d="M0 30L14 24L41 26V36H0Z" fill="#c8d070"/><path d="M4 36L6 30L9 32L12 28L15 31L18 28L21 31L25 28L28 31L31 27L34 30L38 28L41 30V36Z" fill="#2a2a22"/><rect y="36" width="41" height="3" fill="#5a5a68"/><rect y="39" width="41" height="3" fill="#f8f0f0"/><g fill="#999"><rect x="6" y="45" width="6" height="2"/><rect x="18" y="45" width="6" height="2"/><rect x="30" y="45" width="6" height="2"/><rect x="6" y="57" width="6" height="2"/><rect x="18" y="57" width="6" height="2"/><rect x="30" y="57" width="6" height="2"/><rect x="6" y="69" width="6" height="2"/></g><rect x="18" y="66" width="6" height="6" fill="#d8c878"/><g fill="#e85040"><circle cx="6" cy="84" r="1.5"/><circle cx="16" cy="84" r="1.5"/><circle cx="26" cy="84" r="1.5"/><circle cx="35" cy="84" r="1.5"/></g></svg><div class="fl" style="left:456px;top:444px"><span style="letter-spacing:.5px">1f51d9324f674</span><br><span style="letter-spacing:.5px">db869f7bd339e</span><br><span style="letter-spacing:.5px">84287.png</span></div><svg class="a" style="left:33px;top:523px" width="64" height="84"><use href="#doc"/></svg><svg class="a" style="left:33px;top:523px" width="64" height="84"><path d="M10 73.5V62H16Q20.5 62 20.5 65.8Q20.5 69.5 16 69.5H10M26 62V73.5H31Q37.5 73.5 37.5 67.8Q37.5 62 31 62ZM54 62H42V73.5M42 68H52" fill="none" stroke="#c6c6c6" stroke-width="2.2"/></svg><svg class="a" style="left:26px;top:534px" width="39" height="39"><use href="#pb"/></svg><svg class="a" style="left:145px;top:523px" width="64" height="84"><use href="#doc"/></svg><svg class="a" style="left:145px;top:523px" width="64" height="84"><path d="M10 73.5V62H16Q20.5 62 20.5 65.8Q20.5 69.5 16 69.5H10M26 62V73.5H31Q37.5 73.5 37.5 67.8Q37.5 62 31 62ZM54 62H42V73.5M42 68H52" fill="none" stroke="#c6c6c6" stroke-width="2.2"/></svg><svg class="a" style="left:138px;top:534px" width="39" height="39"><use href="#pb"/></svg><svg class="a" style="left:243px;top:521px" width="90" height="90"><use href="#zip"/></svg><svg class="a" style="left:379px;top:519px" width="41" height="40"><rect width="41" height="40" fill="#fafafa"/><rect width="41" height="5" fill="#e84a3a"/><rect y="5" width="41" height="4" fill="#f08070"/><g fill="#bbb"><rect x="4" y="16" width="8" height="1"/><rect x="16" y="16" width="8" height="1"/><rect x="28" y="16" width="8" height="1"/><rect x="4" y="26" width="10" height="1"/></g><rect x="22" y="22" width="3" height="4" fill="#5a9ae0"/></svg></div><div class="a" style="left:737px;top:210px;width:16px;height:553px;background:#191919"></div><svg class="a" style="left:740px;top:214px" width="10" height="8"><path d="M1 6.5L5 2.5L9 6.5L7.5 7.5L5 5L2.5 7.5Z" fill="#8a8a8a"/></svg><svg class="a" style="left:740px;top:752px" width="10" height="8"><path d="M1 1.5L5 5.5L9 1.5L7.5 0.5L5 3L2.5 0.5Z" fill="#8a8a8a"/></svg><div class="a" style="left:738px;top:226px;width:15px;height:72px;background:#4f4f4f"></div><div class="t" style="left:793px;top:478px;width:200px;text-align:center;color:#f0f0f0;font-size:12px;">选择要预览的文件。</div><div class="t" style="left:16px;top:768px;color:#d8d8d8;font-size:12px;">113 个项目&nbsp;&nbsp;&nbsp;|</div><svg class="a" style="left:985px;top:768px" width="17" height="16" viewBox="0 0 17 16"><g fill="#9a9a9a"><rect x="0" y="1" width="3" height="3"/><rect x="0" y="6.5" width="3" height="3"/><rect x="0" y="12" width="3" height="3"/></g><g stroke="#9a9a9a" stroke-width="1"><path d="M5 2.5H16M5 8H16M5 13.5H16" stroke-dasharray="3 1.5"/></g></svg><div class="a" style="left:1004px;top:764px;width:22px;height:23px;background:#5c5c5c;border:1px solid #8a8a8a"></div><svg class="a" style="left:1009px;top:770px" width="14" height="11" viewBox="0 0 14 11"><rect x="0.5" y="0.5" width="13" height="10" fill="#e8f0f8" stroke="#fff" stroke-width="1"/><rect x="2" y="2" width="10" height="7" fill="#4a7ab8"/><path d="M2 9L6 5L9 7L12 4V9Z" fill="#8ab0d0"/></svg></div><div class="a" style="left:0;top:860px;width:1440px;height:40px;background:#1c1c1c"></div><svg class="a" style="left:16px;top:872px" width="16" height="16" viewBox="0 0 16 16"><path d="M0 2.2L6.6 1.3V7.6H0ZM7.4 1.2L16 0V7.6H7.4ZM0 8.4H6.6V14.7L0 13.8ZM7.4 8.4H16V16L7.4 14.8Z" fill="#fff"/></svg><div class="a" style="left:51px;top:860px;width:48px;height:40px;background:#3d3d3d"></div><div class="a" style="left:51px;top:898px;width:48px;height:2px;background:#a6d2f4"></div><div class="a" style="left:104px;top:898px;width:40px;height:2px;background:#a6d2f4"></div><div class="a" style="left:153px;top:898px;width:40px;height:2px;background:#a6d2f4"></div><div class="a" style="left:202px;top:898px;width:40px;height:2px;background:#a6d2f4"></div><svg class="a" style="left:63px;top:870px" width="23" height="19" viewBox="0 0 23 19"><path d="M0.5 2Q0.5 0.5 2 0.5H8L10 2.5H21Q22.5 2.5 22.5 4V18.5H0.5Z" fill="#e8b530"/><rect x="0.5" y="5" width="22" height="13.5" fill="#ffd45a"/><path d="M6 18.5V11H17V18.5H14V14H9V18.5Z" fill="#2a86d8"/></svg><svg class="a" style="left:112px;top:868px" width="24" height="24" viewBox="0 0 24 24"><circle cx="12" cy="12" r="11.5" fill="#db4437"/><path d="M12 12L2 6.2A11.5 11.5 0 0 0 6.3 22Z" fill="#0f9d58"/><path d="M12 12L6.3 22A11.5 11.5 0 0 0 23.5 12Z" fill="#f4c20d"/><path d="M12 12H23.5A11.5 11.5 0 0 0 22 6.2H12Z" fill="#db4437"/><path d="M12 12L2 6.2A11.5 11.5 0 0 1 22 6.2H12Z" fill="#db4437"/><circle cx="12" cy="12" r="5.2" fill="#fff"/><circle cx="12" cy="12" r="4.1" fill="#4285f4"/></svg><svg class="a" style="left:162px;top:869px" width="23" height="23" viewBox="0 0 23 23"><rect x="0" y="0" width="21" height="21" rx="3" fill="#2b8cf0"/><path d="M3.5 5L7.5 15L10.5 8L13.5 15L17.5 5" fill="none" stroke="#fff" stroke-width="2.2" stroke-linejoin="round"/><rect x="14" y="14" width="8.5" height="8.5" rx="1" fill="#6aa8f0" stroke="#181818" stroke-width="0.8"/><path d="M15.5 16.5L17 20.5L18.2 18L19.4 20.5L21 16.5" fill="none" stroke="#fff" stroke-width="0.9"/></svg><svg class="a" style="left:210px;top:868px" width="24" height="24" viewBox="0 0 24 24"><rect x="0" y="0" width="11.5" height="11.5" fill="#a84a20"/><path d="M2 9L6 2L10 8Z" fill="#e88a40"/><rect x="12.5" y="0" width="11.5" height="11.5" fill="#8a8a8a"/><rect x="14" y="2" width="8" height="8" fill="#b0b0b0"/><rect x="0" y="12.5" width="11.5" height="11.5" fill="#2a3a5a"/><path d="M1 22L5 17L10 22Z" fill="#c8d0e0"/><rect x="12.5" y="12.5" width="11.5" height="11.5" fill="#a89078"/><rect x="16" y="13" width="4" height="11" fill="#6a5a48"/></svg><svg class="a" style="left:1157px;top:869px" width="24" height="23" viewBox="0 0 24 23"><circle cx="11" cy="11" r="10.3" fill="#1a8ae0" stroke="#e8f4ff" stroke-width="1.4"/><text x="11" y="16" text-anchor="middle" font-family="Liberation Sans" font-weight="bold" font-size="15" fill="#fff">?</text><circle cx="18.5" cy="17.5" r="4.5" fill="#f5a623"/><rect x="18" y="15" width="1.2" height="4.5" fill="#fff"/></svg><svg class="a" style="left:1189px;top:875px" width="13" height="9" viewBox="0 0 13 9"><path d="M1 7.5L6.5 2L12 7.5" fill="none" stroke="#fff" stroke-width="1.3"/></svg><svg class="a" style="left:1211px;top:873px" width="17" height="16" viewBox="0 0 17 16"><rect x="3.5" y="1.5" width="12.5" height="9.5" fill="none" stroke="#fff" stroke-width="1.1"/><path d="M9.5 11V14M5.5 14.5H13.5" stroke="#fff" stroke-width="1.1"/><rect x="0.5" y="4" width="4" height="11" fill="#1c1c1c" stroke="#fff" stroke-width="1"/></svg><svg class="a" style="left:1235px;top:873px" width="18" height="16" viewBox="0 0 18 16"><path d="M1 5.5H4L8 2V14L4 10.5H1Z" fill="none" stroke="#fff" stroke-width="1.2" stroke-linejoin="round"/><path d="M10.5 5.5Q12 8 10.5 10.5M12.8 3.5Q15.5 8 12.8 12.5M15 1.5Q19 8 15 14.5" fill="none" stroke="#fff" stroke-width="1.1"/></svg><div class="t" style="left:1207px;top:872px;width:120px;text-align:center;color:#fff;font-size:15px;">中</div><svg class="a" style="left:1285px;top:870px" width="20" height="20" viewBox="0 0 20 20"><path d="M5 1H18Q19.5 1 19 3L16 17Q15.5 19 13.5 19H2Q0.5 19 1 17L3.5 3Q4 1 5 1Z" fill="#e84a1a"/><path d="M14 6.5Q12.5 5 10 5Q6.5 5 6.5 8Q6.5 10 9.5 10.5Q12.5 11 12 13Q11.5 15 8.5 15Q6 15 4.5 13.5" fill="none" stroke="#fff" stroke-width="2.4" stroke-linecap="round"/></svg><div class="t" style="left:1290px;top:863px;width:120px;text-align:center;color:#fff;font-size:12px;">16:11</div><div class="t" style="left:1291px;top:881px;width:120px;text-align:center;color:#fff;font-size:12px;letter-spacing:.5px">2021/2/18</div><svg class="a" style="left:1397px;top:870px" width="26" height="26" viewBox="0 0 26 26"><path d="M1 2H17V13H8L4 17V13H1Z" fill="#fff"/><path d="M4 5H14M4 8H14M4 11H11" stroke="#1c1c1c" stroke-width="1.2"/><circle cx="17.5" cy="17" r="7" fill="#1c1c1c" stroke="#aaa" stroke-width="1"/><text x="17.5" y="21.5" text-anchor="middle" font-family="Liberation Sans" font-weight="bold" font-size="12" fill="#fff">1</text></svg><div class="a" style="left:1435px;top:860px;width:1px;height:40px;background:#777"></div><div class="a" style="left:1279px;top:827px;width:84px;height:33px;background:#080808"></div><svg class="a" style="left:1252px;top:818px" width="30" height="42" viewBox="0 0 30 42"><defs><linearGradient id="lp" x1="0" y1="0" x2="0" y2="1"><stop offset="0" stop-color="#d0ccc0"/><stop offset="1" stop-color="#b89868"/></linearGradient></defs><path d="M6 2Q10 1 14 2L19 15H1.5Z" fill="url(#lp)"/><path d="M10 15V42" stroke="#8a8478" stroke-width="0.8"/><path d="M17 17Q21 16 25 17L28.5 29H13.5Z" fill="url(#lp)"/><path d="M21 29V42" stroke="#8a8478" stroke-width="0.8"/></svg><div class="t" style="left:1235px;top:835px;width:120px;text-align:center;color:#8a8a8a;font-size:14px;">中</div><svg class="a" style="left:1308px;top:836px" width="6" height="14" viewBox="0 0 6 14"><ellipse cx="3" cy="3.5" rx="2" ry="2.5" fill="none" stroke="#8a8a8a" stroke-width="1.1"/><ellipse cx="3" cy="10" rx="2" ry="2.5" fill="none" stroke="#8a8a8a" stroke-width="1.1"/></svg><div class="t" style="left:1268px;top:835px;width:120px;text-align:center;color:#8a8a8a;font-size:14px;">简</div><svg class="a" style="left:1343px;top:836px" width="16" height="14" viewBox="0 0 16 14"><path d="M5 1L1 4L3 7L4 6V13H12V6L13 7L15 4L11 1Q8 3 5 1Z" fill="#8a8a7a"/></svg></body></html>
